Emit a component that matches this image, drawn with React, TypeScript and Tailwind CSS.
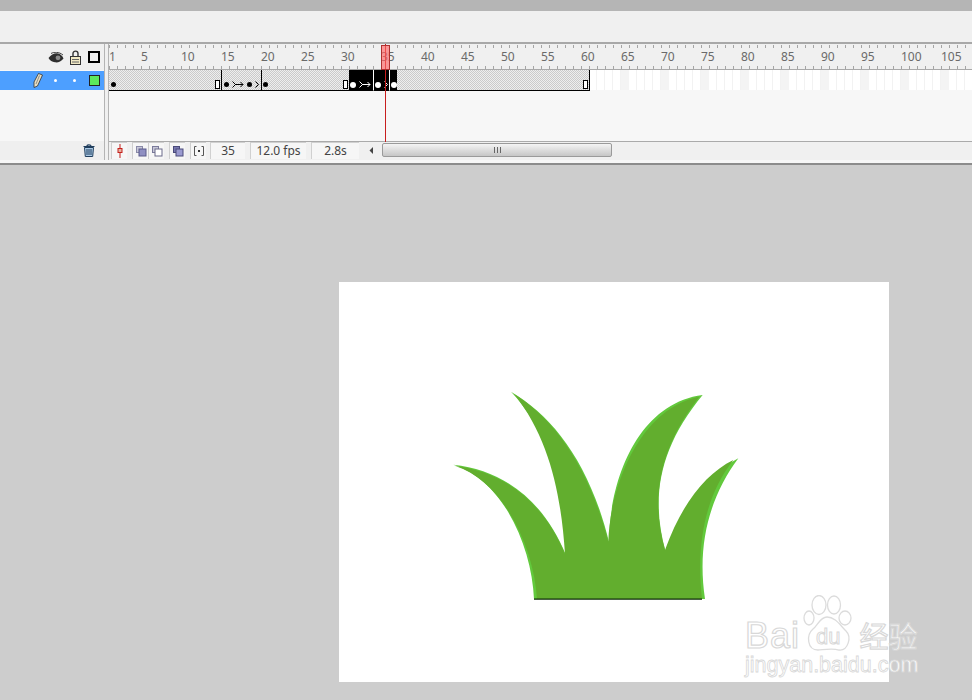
import type { ReactNode } from 'react';

const rulerMarks = [5, 10, 15, 20, 25, 30, 35, 40, 45, 50, 55, 60, 65, 70, 75, 80, 85, 90, 95, 100, 105];
const emptyFrames = Array.from({ length: 47 }, (_, i) => i + 62);

function Dot({ light }: { light?: boolean }) {
    return <span className={light ? 'w-[6px] h-[6px] rounded-full bg-white' : 'w-[5px] h-[5px] rounded-full bg-black'} />;
}

function Blank() {
    return <span className="w-[5px] h-[9px] border border-black bg-white" />;
}

function Arrow({ color = '#000', short }: { color?: string; short?: boolean }) {
    if (short) {
        return (
            <svg width="4" height="7" viewBox="0 0 4 7" fill="none" stroke={color}>
                <path d="M0.5 0.5 L3.5 3.5 L0.5 6.5" />
            </svg>
        );
    }
    return (
        <svg width="12" height="7" viewBox="0 0 12 7" fill="none" stroke={color}>
            <path d="M0.5 0.5 L3.5 3.5 L0.5 6.5 M3 3.5 H11 M8.5 1 L11 3.5 L8.5 6" />
        </svg>
    );
}

function Span({ className, children }: { className: string; children?: ReactNode }) {
    return <div className={'h-full shrink-0 flex items-center pt-[9px] border-b border-black ' + className}>{children}</div>;
}

function ToolIcon({ children }: { children: ReactNode }) {
    return (
        <span className="w-[16px] h-[17px] flex items-center justify-center bg-[#f6f6f6] border-t border-l border-[#cfcfcf]">
            <svg width="14" height="14" viewBox="0 0 14 14">{children}</svg>
        </span>
    );
}

function Readout({ className, children }: { className: string; children: ReactNode }) {
    return (
        <span className={'h-[17px] flex items-center justify-center bg-[#f6f6f6] border-t border-l border-[#d0d0d0] text-[12px] text-[#444] ' + className}>
            {children}
        </span>
    );
}

export default function App() {
    return (
        <div className="relative w-[972px] h-[700px] overflow-hidden bg-[#cdcdcd] font-['Noto_Sans',sans-serif]">
            <div className="h-[11px] bg-[#b5b5b5]" />
            <div className="h-[31px] bg-[#f0f0f0]" />
            <div className="h-[2px] bg-[#a8a8a8]" />

            {/* Timeline */}
            <div className="flex h-[116px] bg-[#f7f7f7]">
                <div className="w-[104px] shrink-0 flex flex-col">
                    <div className="h-[26px] bg-[#f0f0f0] flex items-center justify-end pr-[4px]">
                        <svg width="16" height="11" viewBox="0 0 16 11" className="mr-[6px]">
                            <path d="M0.5 6 C3 2.5 6 1 9 1.2 C12 1.5 14.5 3.5 15.5 6.5 C13 9.5 10 10.8 7 10.3 C4 10 2 8.5 0.5 6 Z" fill="#2e2e2e" />
                            <path d="M3 1.5 C6 -0.3 11 -0.3 15 3" fill="none" stroke="#2e2e2e" strokeWidth="0.9" />
                            <circle cx="10" cy="5.8" r="2.4" fill="#8a8a8a" />
                        </svg>
                        <svg width="11" height="15" viewBox="0 0 11 15" className="mr-[7px]">
                            <path d="M3 7 V3.5 C3 0.3 8 0.3 8 3.5 V7" fill="none" stroke="#333" strokeWidth="1.4" />
                            <rect x="0.5" y="6.5" width="10" height="8" fill="#f0e8c4" stroke="#333" />
                            <path d="M2 9.5 H9 M2 12 H9" stroke="#666" />
                        </svg>
                        <span className="w-[12px] h-[12px] border-2 border-black bg-[#f0f0f0]" />
                    </div>
                    <div className="h-[19px] mt-[1px] bg-[#4d9fff] flex items-center justify-end pr-[4px]">
                        <svg width="10" height="15" viewBox="0 0 10 15" className="mr-[11px]">
                            <path d="M5.5 0.5 L9.5 2 L4.5 13 L1 14.5 L1 9 Z" fill="#e9dfc4" stroke="#333" strokeWidth="0.8" />
                            <path d="M6.5 2.5 L3 11" stroke="#777" strokeWidth="0.8" />
                        </svg>
                        <span className="w-[3px] h-[3px] rounded-full bg-white mr-[16px]" />
                        <span className="w-[3px] h-[3px] rounded-full bg-white mr-[13px]" />
                        <span className="w-[11px] h-[11px] border border-[#222] bg-[#5ce85c]" />
                    </div>
                    <div className="flex-1" />
                    <div className="h-[19px] bg-[#efefef] flex items-center justify-end pr-[9px]">
                        <svg width="12" height="13" viewBox="0 0 12 13">
                            <path d="M0.5 2.5 H11.5 M4 2 C4 0.5 8 0.5 8 2" fill="none" stroke="#1f3d5c" strokeWidth="1.2" />
                            <path d="M1.5 3.5 H10.5 L9.7 12.5 H2.3 Z" fill="#a9c8e4" stroke="#1f3d5c" />
                            <path d="M4 5 V11 M6 5 V11 M8 5 V11" stroke="#1f3d5c" />
                        </svg>
                    </div>
                </div>

                <div className="w-[5px] shrink-0 bg-[#f0f0f0] border-x border-[#b4b4b4]" />

                <div className="flex-1 min-w-0 flex flex-col">
                    {/* Ruler */}
                    <div className="relative h-[26px] bg-[#f0f0f0] flex items-center border-b border-[#a9a9a9] text-[12px] leading-none text-[#6a6a6a]">
                        <div className="absolute left-0 right-0 top-[1px] h-[3px] bg-[repeating-linear-gradient(90deg,#a5a5a5_0,#a5a5a5_1px,transparent_1px,transparent_8px)]" />
                        <span className="w-[32px] shrink-0 pt-[1px]">1</span>
                        {rulerMarks.map((mark) => (
                            <span key={mark} className="w-[40px] shrink-0 pt-[1px]">{mark}</span>
                        ))}
                        <div className="absolute left-0 right-0 bottom-0 h-[3px] bg-[repeating-linear-gradient(90deg,#a5a5a5_0,#a5a5a5_1px,transparent_1px,transparent_8px)]" />
                    </div>

                    {/* Frame spans */}
                    <div className="h-[21px] flex bg-[#f7f7f7]">
                        <Span className="w-[113px] justify-between pl-[2px] pr-[1px] border-r bg-[repeating-conic-gradient(#cacaca_0_25%,#eeeeee_0_50%)] bg-[length:2px_2px]">
                            <Dot />
                            <Blank />
                        </Span>
                        <Span className="w-[40px] gap-[3px] pl-[2px] border-r bg-[repeating-conic-gradient(#cacaca_0_25%,#eeeeee_0_50%)] bg-[length:2px_2px]">
                            <Dot />
                            <Arrow />
                            <Dot />
                            <Arrow short />
                        </Span>
                        <Span className="w-[87px] justify-between pl-[1px] pr-[1px] bg-[repeating-conic-gradient(#cacaca_0_25%,#eeeeee_0_50%)] bg-[length:2px_2px]">
                            <Dot />
                            <Blank />
                        </Span>
                        <Span className="w-[25px] gap-[3px] pl-[1px] bg-black border-r border-r-white">
                            <Dot light />
                            <Arrow color="#fff" />
                        </Span>
                        <Span className="w-[16px] gap-[3px] pl-[1px] bg-black border-r border-r-white">
                            <Dot light />
                            <Arrow color="#fff" short />
                        </Span>
                        <Span className="w-[7px] justify-center bg-black">
                            <Dot light />
                        </Span>
                        <Span className="w-[193px] justify-end pr-[1px] border-r bg-[repeating-conic-gradient(#cacaca_0_25%,#eeeeee_0_50%)] bg-[length:2px_2px]">
                            <Blank />
                        </Span>
                        <div className="w-[7px] h-[20px] shrink-0 bg-white border-r border-[#f3f3f3]" />
                        {emptyFrames.map((frame) => (
                            <div
                                key={frame}
                                className={frame % 5 === 0 ? 'w-[8px] h-[20px] shrink-0 bg-[#f4f4f4]' : 'w-[8px] h-[20px] shrink-0 bg-white border-r border-[#f2f2f2]'}
                            />
                        ))}
                    </div>

                    <div className="flex-1 border-b border-[#aaaaaa]" />

                    {/* Status row */}
                    <div className="h-[18px] bg-[#f0f0f0] flex items-start pl-[2px]">
                        <ToolIcon>
                            <path d="M7 0 V14" stroke="#c4201c" />
                            <rect x="5" y="4.5" width="4" height="4" fill="#e8b0a0" stroke="#c4201c" />
                        </ToolIcon>
                        <span className="w-[5px]" />
                        <ToolIcon>
                            <rect x="2.5" y="2.5" width="6" height="6" fill="#c8c8d8" stroke="#8a8aa8" />
                            <rect x="5" y="5" width="7" height="7" fill="#8f8fc2" stroke="#5a5a8a" />
                        </ToolIcon>
                        <ToolIcon>
                            <rect x="2.5" y="2.5" width="6" height="6" fill="#c8c8d8" stroke="#7a7a9a" />
                            <rect x="5" y="5" width="7" height="7" fill="#fff" stroke="#6a6a8a" />
                        </ToolIcon>
                        <span className="w-[5px]" />
                        <ToolIcon>
                            <rect x="2.5" y="2.5" width="6" height="6" fill="#7878b0" stroke="#4a4a7a" />
                            <rect x="5" y="5" width="7" height="7" fill="#9a9ad0" stroke="#4a4a7a" />
                        </ToolIcon>
                        <span className="w-[5px]" />
                        <ToolIcon>
                            <path d="M4.5 2.5 H2.5 V11.5 H4.5 M9.5 2.5 H11.5 V11.5 H9.5" fill="none" stroke="#555" />
                            <rect x="6" y="6" width="2" height="2" fill="#333" />
                        </ToolIcon>
                        <span className="w-[4px]" />
                        <Readout className="w-[35px]">35</Readout>
                        <span className="w-[5px]" />
                        <Readout className="w-[56px]">12.0 fps</Readout>
                        <span className="w-[5px]" />
                        <Readout className="w-[48px]">2.8s</Readout>
                        <span className="w-[10px]" />
                        <svg width="5" height="7" viewBox="0 0 5 7" className="mt-[5px]">
                            <path d="M4 0 V7 L0.5 3.5 Z" fill="#444" />
                        </svg>
                        <span className="w-[8px]" />
                        <div className="w-[230px] h-[14px] mt-[1px] rounded-[2px] border border-[#9a9a9a] bg-gradient-to-b from-[#f4f4f4] to-[#c6c6c6] flex items-center justify-center">
                            <svg width="7" height="6" viewBox="0 0 7 6">
                                <path d="M0.5 0 V6 M3.5 0 V6 M6.5 0 V6" stroke="#666" />
                            </svg>
                        </div>
                    </div>
                </div>
            </div>
            <div className="h-[3px] bg-[#f7f7f7]" />
            <div className="h-[2px] bg-[#8c8c8c]" />

            {/* Playhead */}
            <div className="absolute left-[385px] top-[44px] w-[1px] h-[98px] bg-[#c81e1e]" />
            <div className="absolute left-[381px] top-[45px] w-[9px] h-[25px] bg-[#ff6666]/65 border border-[#b03030]" />

            {/* Stage */}
            <div className="w-[550px] h-[400px] ml-[339px] mt-[117px] bg-white">
                <svg width="550" height="400" viewBox="339 282 550 400">
                    <g transform="translate(440 380) scale(0.33333)">
                        <path
                            d="M282 657 C275 500 190 300 40 254 C190 270 310 360 378 525 C375 350 340 170 213 35 C340 110 450 250 508 490 C505 310 590 70 788 45 C660 200 630 350 677 515 C730 380 810 280 895 235 C810 350 770 490 795 657 Z"
                            fill="#62c93c"
                        />
                        <path
                            d="M291 657 C282 500 190 305 46 258 C190 275 310 365 375 522 C364 355 332 178 222 42 C340 115 445 255 505 485 C510 318 600 84 778 50 C660 200 630 350 675 510 C725 372 795 282 880 240 C795 350 768 490 786 657 Z"
                            fill="#62ae2e"
                        />
                        <path d="M282 657.5 H786" stroke="#0a2a05" strokeWidth="4" />
                    </g>
                </svg>
            </div>

            {/* Watermark */}
            <div className="absolute left-[745px] top-[595px] w-[175px] text-white">
                <svg width="55" height="58" viewBox="0 0 55 58" className="absolute left-[57px] top-0" fill="none" stroke="#dcdcdc" strokeWidth="1.3">
                    <ellipse cx="17" cy="10" rx="7" ry="9.5" />
                    <ellipse cx="32" cy="10" rx="6.5" ry="9" />
                    <ellipse cx="7" cy="23" rx="5" ry="7" />
                    <ellipse cx="43" cy="23" rx="6" ry="7" />
                    <path d="M25 22 C18 22 16 30 11 34 C4 40 5 55 16 55 C20 55 30 53 37 55 C46 56 50 42 44 36 C38 30 33 22 25 22 Z" />
                </svg>
                <div className="relative pt-[23px] flex items-baseline text-[36px] leading-none tracking-[1px] font-['Liberation_Sans',sans-serif] [-webkit-text-stroke:1.2px_#d8d8d8]">
                    <span>Bai</span>
                    <span className="ml-[16px] text-[22px] tracking-normal -translate-y-[4px] [-webkit-text-stroke:1px_#d8d8d8]">du</span>
                    <span className="ml-[19px] text-[29px] tracking-normal font-['Noto_Sans_CJK_SC',sans-serif]">经验</span>
                </div>
                <div className="relative mt-[1px] text-[21.5px] leading-none font-['Liberation_Sans',sans-serif] [-webkit-text-stroke:0.8px_#d8d8d8]">
                    jingyan.baidu.com
                </div>
            </div>
        </div>
    );
}
